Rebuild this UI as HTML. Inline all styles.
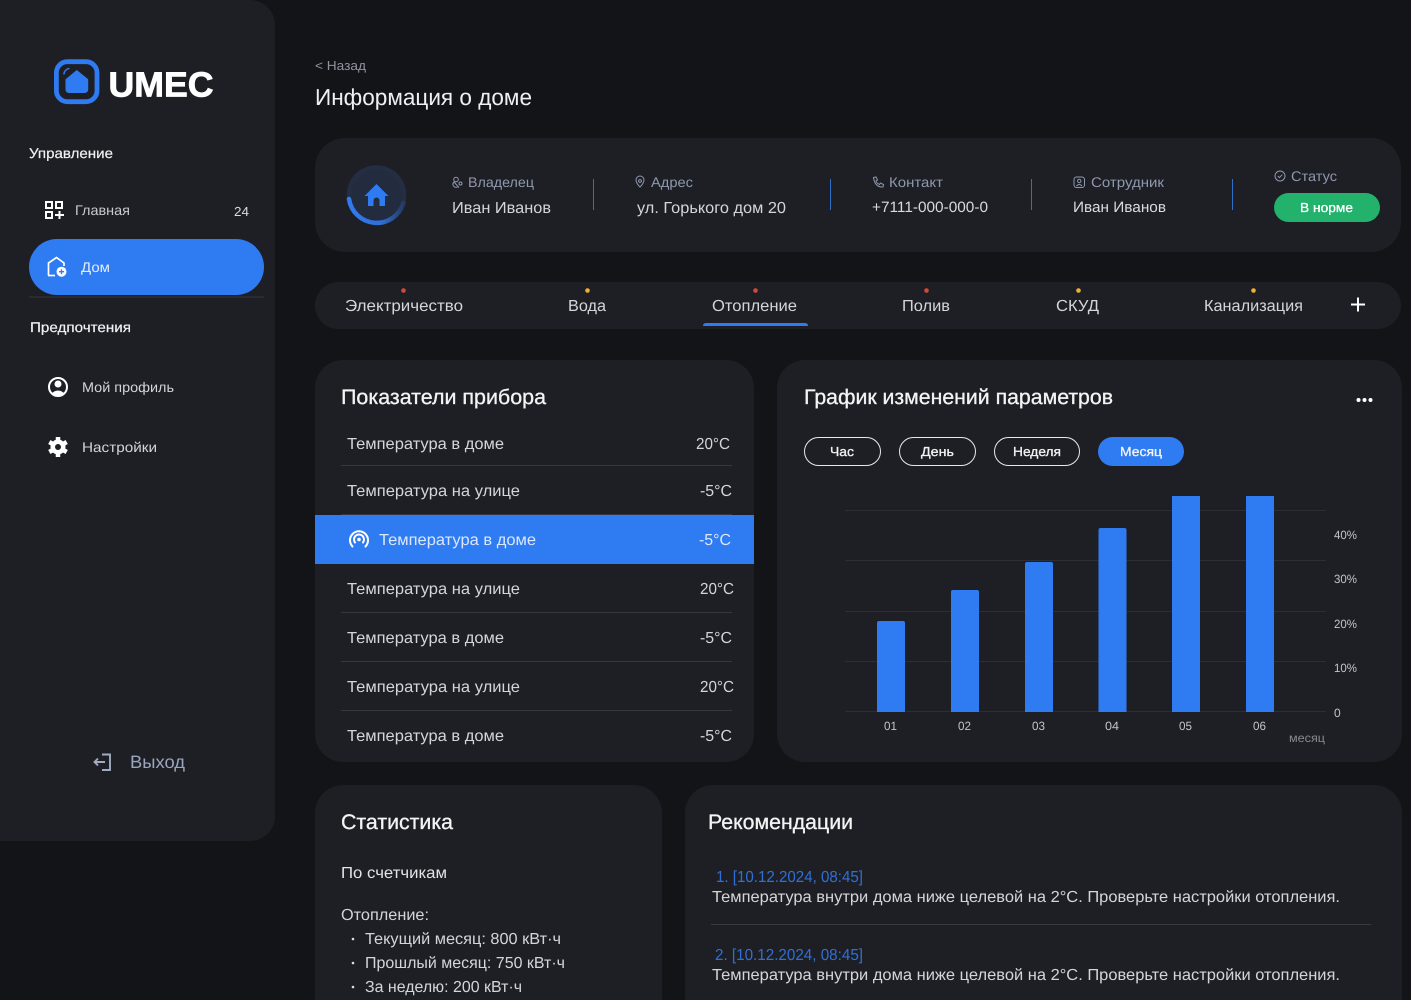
<!DOCTYPE html>
<html lang="ru"><head><meta charset="utf-8"><title>UMEC</title>
<style>
html,body{margin:0;padding:0;background:#131417;width:1411px;height:1000px;overflow:hidden}
svg{display:block}
text{font-family:"Liberation Sans",sans-serif;font-size:16px;fill:#dcdde0;text-rendering:geometricPrecision}
.h{font-size:21px;fill:#f4f4f5;stroke:#f4f4f5;stroke-width:.3px}
.s{font-size:14px;fill:#8f98ad}
.n{font-size:14px;fill:#d9dade}
.r{font-size:16px;fill:#d4d5d8}
.c{font-size:12px;fill:#c4c5c9}
.b{font-size:13px;fill:#f2f2f3;stroke:#f2f2f3;stroke-width:.3px}
.m{font-size:14px;fill:#f0f0f2;stroke:#f0f0f2;stroke-width:.2px}
</style></head><body>
<svg width="1411" height="1000" viewBox="0 0 1411 1000" xmlns="http://www.w3.org/2000/svg">
<defs>
<linearGradient id="g" x1="0" y1="0" x2="1" y2="0"><stop offset="0" stop-color="#2f7bf2"/><stop offset=".6" stop-color="#2f6fd8"/><stop offset="1" stop-color="#25395f"/></linearGradient>
</defs>
<rect width="1411" height="1000" fill="#131417"/>

<!-- sidebar -->
<path d="M0 0H250a25 25 0 0 1 25 25V816a25 25 0 0 1-25 25H0Z" fill="#1e1f25"/>
<rect x="56.400" y="61.700" width="40.600" height="40" rx="11" fill="none" stroke="#2f7bf2" stroke-width="4.800"/>
<path d="M66 79.500 76.800 70.700 87.700 79.500V89.500a3 3 0 0 1-3 3H69a3 3 0 0 1-3-3Z" fill="#2f7bf2" stroke="#2f7bf2" stroke-width="1" stroke-linejoin="round"/>
<path d="M63.800 74.500q.5-5 5.700-6.200" fill="none" stroke="#2f7bf2" stroke-width="1.500"/>
<text x="108.500" y="96.500" textLength="105" lengthAdjust="spacingAndGlyphs" style="font-size:35px;font-weight:700;fill:#fff;stroke:#fff;stroke-width:.8px">UMEC</text>

<text x="29" y="158" textLength="84" lengthAdjust="spacingAndGlyphs" class="m">Управление</text>
<g fill="none" stroke="#fff" stroke-width="2">
<rect x="46" y="202" width="6" height="6"/><rect x="56" y="202" width="6" height="6"/><rect x="46" y="212" width="6" height="6"/>
<path d="M55 215h9M59.500 211v8"/>
</g>
<text x="75" y="215" textLength="55" lengthAdjust="spacingAndGlyphs" class="n" style="fill:#c9cacd">Главная</text>
<text x="234" y="216" textLength="15" lengthAdjust="spacingAndGlyphs" class="n" style="font-size:13px">24</text>

<rect x="29" y="239" width="235" height="56" rx="28" fill="#2f7bf2"/>
<path d="M48.500 275.500V263L56.500 257.500l7.500 5.500v3" fill="none" stroke="#fff" stroke-width="1.700"/>
<path d="M48 275.500h7" stroke="#fff" stroke-width="1.700"/>
<circle cx="61.500" cy="271.700" r="5" fill="#fff"/><path d="M59 271.700h5M61.500 269.200v5" stroke="#2f7bf2" stroke-width="1.300"/>
<text x="81" y="272" textLength="29" lengthAdjust="spacingAndGlyphs" class="n" style="fill:#e4ecfb">Дом</text>
<rect x="29" y="296" width="235" height="2" fill="#2a2b31"/>

<text x="30" y="332" textLength="101" lengthAdjust="spacingAndGlyphs" class="m">Предпочтения</text>
<circle cx="58" cy="387" r="9" fill="none" stroke="#fff" stroke-width="2"/>
<circle cx="58" cy="384" r="3.500" fill="#fff"/>
<path d="M51.500 393.500q6.500-6 13 0q-6.500 4-13 0Z" fill="#fff"/>
<text x="82" y="392" textLength="92" lengthAdjust="spacingAndGlyphs" class="n" style="fill:#d3d4d7">Мой профиль</text>
<g stroke="#fff" stroke-width="4.500"><path d="M58 437v20M49.300 442l17.400 10M49.300 452l17.400-10"/></g>
<circle cx="58" cy="447" r="7.500" fill="#fff"/><circle cx="58" cy="447" r="3" fill="#1e1f25"/>
<text x="82" y="452" textLength="75" lengthAdjust="spacingAndGlyphs" class="n" style="fill:#d3d4d7">Настройки</text>

<path d="M102 754.500h8v15.500H102M105 762H94.500M98 758.500 94.500 762l3.500 3.500" fill="none" stroke="#a0abc3" stroke-width="1.900"/>
<text x="130" y="768" textLength="55" lengthAdjust="spacingAndGlyphs" style="font-size:18px;fill:#9aa6bf">Выход</text>

<!-- header -->
<text x="315" y="70" textLength="51" lengthAdjust="spacingAndGlyphs" style="font-size:13px;fill:#8f93a0">&lt; Назад</text>
<text x="315" y="105" textLength="217" lengthAdjust="spacingAndGlyphs" style="font-size:23px;fill:#f0f0f2">Информация о доме</text>

<rect x="315" y="138" width="1086" height="114" rx="30" fill="#1e1f25"/>
<circle cx="376.500" cy="195" r="29.800" fill="#232e44"/>
<circle cx="376.500" cy="195" r="25" fill="#232c3e"/>
<path d="M349 199A28 28 0 0 0 403.500 203" fill="none" stroke="url(#g)" stroke-width="4.500" stroke-linecap="round"/>
<path d="M376.500 184 388.500 196H385V206H379.500V200.500a3 3 0 0 0-6 0V206H368V196H364.500Z" fill="#2f7bf2"/>

<g fill="none" stroke="#8f98ad" stroke-width="1">
<circle cx="456" cy="179.500" r="2.300"/><path d="M459 187.500 454 182q-2 2-.5 4t4 1"/><circle cx="460.500" cy="183.500" r="1.500"/>
<path d="M640 187q-4-4-4-7a4 4 0 0 1 8 0q0 3-4 7Z"/><circle cx="640" cy="181" r="1.400"/>
<path d="M873.500 177.500l2.500-.500 1.500 3-1.500 1q1 2.500 3.500 3.500l1-1.500 3 1.500-.5 2.500q-8 .5-9.500-9.500Z"/>
<rect x="1074" y="177" width="10.500" height="10.500" rx="2.500"/><circle cx="1079.250" cy="181" r="1.700"/><path d="M1076.500 186q2.700-3 5.500 0"/>
<circle cx="1280" cy="176" r="5"/><path d="M1277.800 176l1.600 1.700 2.800-3"/>
</g>

<text x="468" y="187" textLength="66" lengthAdjust="spacingAndGlyphs" class="s">Владелец</text>
<text x="452" y="213" textLength="99" lengthAdjust="spacingAndGlyphs" class="r">Иван Иванов</text>
<text x="651" y="187" textLength="42" lengthAdjust="spacingAndGlyphs" class="s">Адрес</text>
<text x="637" y="213" textLength="149" lengthAdjust="spacingAndGlyphs" class="r">ул. Горького дом 20</text>
<text x="889" y="187" textLength="54" lengthAdjust="spacingAndGlyphs" class="s">Контакт</text>
<text x="872" y="212" textLength="116" lengthAdjust="spacingAndGlyphs" class="n" style="font-size:15px">+7111-000-000-0</text>
<text x="1091" y="187" textLength="73" lengthAdjust="spacingAndGlyphs" class="s">Сотрудник</text>
<text x="1073" y="212" textLength="93" lengthAdjust="spacingAndGlyphs" class="n" style="font-size:15px">Иван Иванов</text>
<text x="1291" y="181" textLength="46" lengthAdjust="spacingAndGlyphs" class="s">Статус</text>
<g fill="#2e6fc9"><rect x="593" y="179" width="1" height="31"/><rect x="830" y="179" width="1" height="31"/><rect x="1031" y="179" width="1" height="31"/><rect x="1232" y="179" width="1" height="31"/></g>
<rect x="1274" y="193" width="106" height="29" rx="14.500" fill="#22b26c"/>
<text x="1300" y="212" textLength="53" lengthAdjust="spacingAndGlyphs" class="b" style="fill:#fff;stroke:#fff">В норме</text>

<!-- tabs -->
<rect x="315" y="282" width="1086" height="47" rx="23.500" fill="#1e1f25"/>
<g fill="#d2493a"><circle cx="403.500" cy="290.500" r="2.300"/><circle cx="755.500" cy="290.500" r="2.300"/><circle cx="926.500" cy="290.500" r="2.300"/></g>
<g fill="#f2ae2e"><circle cx="587.500" cy="290.500" r="2.300"/><circle cx="1078.500" cy="290.500" r="2.300"/><circle cx="1253.500" cy="290.500" r="2.300"/></g>
<g>
<text x="345" y="311" textLength="118" lengthAdjust="spacingAndGlyphs" class="r">Электричество</text>
<text x="568" y="311" textLength="38" lengthAdjust="spacingAndGlyphs" class="r">Вода</text>
<text x="712" y="311" textLength="85" lengthAdjust="spacingAndGlyphs" class="r">Отопление</text>
<text x="902" y="311" textLength="48" lengthAdjust="spacingAndGlyphs" class="r">Полив</text>
<text x="1056" y="311" textLength="43" lengthAdjust="spacingAndGlyphs" class="r">СКУД</text>
<text x="1204" y="311" textLength="99" lengthAdjust="spacingAndGlyphs" class="r">Канализация</text>
</g>
<path d="M703 326q0-3 3-3h99q3 0 3 3Z" fill="#2f7bf2"/>
<path d="M1351 304.500h14M1358 297.500v14" stroke="#fff" stroke-width="2"/>

<!-- device panel -->
<rect x="315" y="360" width="439" height="402" rx="28" fill="#1e1f25"/>
<text x="341" y="404" textLength="205" lengthAdjust="spacingAndGlyphs" class="h">Показатели прибора</text>
<g fill="#36373d"><rect x="341" y="465" width="391" height="1"/><rect x="341" y="514" width="391" height="1"/><rect x="341" y="612" width="391" height="1"/><rect x="341" y="661" width="391" height="1"/><rect x="341" y="710" width="391" height="1"/></g>
<rect x="315" y="515" width="439" height="49" fill="#2f7bf2"/>
<text x="347" y="449" textLength="157" lengthAdjust="spacingAndGlyphs" class="r">Температура в доме</text>
<text x="696" y="449" textLength="34" lengthAdjust="spacingAndGlyphs" class="r">20°C</text>
<text x="347" y="496" textLength="173" lengthAdjust="spacingAndGlyphs" class="r">Температура на улице</text>
<text x="700" y="496" textLength="32" lengthAdjust="spacingAndGlyphs" class="r">-5°C</text>
<g fill="none" stroke="#fff" stroke-width="2" stroke-linecap="round">
<path d="M352.500 546.500A9 9 0 1 1 365.500 546.500"/><path d="M355 542.500A5 5 0 1 1 363 542.500"/>
</g><circle cx="359" cy="539.500" r="1.800" fill="#fff"/>
<text x="379" y="545" textLength="157" lengthAdjust="spacingAndGlyphs" class="r" style="fill:#dbe7fd">Температура в доме</text>
<text x="699" y="545" textLength="32" lengthAdjust="spacingAndGlyphs" class="r" style="fill:#dbe7fd">-5°C</text>
<text x="347" y="594" textLength="173" lengthAdjust="spacingAndGlyphs" class="r">Температура на улице</text>
<text x="700" y="594" textLength="34" lengthAdjust="spacingAndGlyphs" class="r">20°C</text>
<text x="347" y="643" textLength="157" lengthAdjust="spacingAndGlyphs" class="r">Температура в доме</text>
<text x="700" y="643" textLength="32" lengthAdjust="spacingAndGlyphs" class="r">-5°C</text>
<text x="347" y="692" textLength="173" lengthAdjust="spacingAndGlyphs" class="r">Температура на улице</text>
<text x="700" y="692" textLength="34" lengthAdjust="spacingAndGlyphs" class="r">20°C</text>
<text x="347" y="741" textLength="157" lengthAdjust="spacingAndGlyphs" class="r">Температура в доме</text>
<text x="700" y="741" textLength="32" lengthAdjust="spacingAndGlyphs" class="r">-5°C</text>

<!-- chart panel -->
<rect x="777" y="360" width="625" height="402" rx="28" fill="#1e1f25"/>
<text x="804" y="404" textLength="309" lengthAdjust="spacingAndGlyphs" class="h">График изменений параметров</text>
<g fill="#fff"><circle cx="1358.500" cy="400" r="2"/><circle cx="1364.500" cy="400" r="2"/><circle cx="1370.500" cy="400" r="2"/></g>
<g fill="none" stroke="#e8e8ea" stroke-width="1">
<rect x="804.500" y="437.500" width="76" height="28" rx="14"/>
<rect x="899.500" y="437.500" width="76" height="28" rx="14"/>
<rect x="994.500" y="437.500" width="85" height="28" rx="14"/>
</g>
<rect x="1098" y="437" width="86" height="29" rx="14.500" fill="#2f7bf2"/>
<text x="830" y="456" textLength="24" lengthAdjust="spacingAndGlyphs" class="b">Час</text>
<text x="921" y="456" textLength="33" lengthAdjust="spacingAndGlyphs" class="b">День</text>
<text x="1013" y="456" textLength="48" lengthAdjust="spacingAndGlyphs" class="b">Неделя</text>
<text x="1120" y="456" textLength="42" lengthAdjust="spacingAndGlyphs" class="b">Месяц</text>
<g fill="#2d2e34"><rect x="845" y="510" width="481" height="1"/><rect x="845" y="560" width="481" height="1"/><rect x="845" y="611" width="481" height="1"/><rect x="845" y="661" width="481" height="1"/><rect x="845" y="711" width="481" height="1"/></g>
<g fill="#2f7bf2">
<path d="M877 712V623a2 2 0 0 1 2-2h24a2 2 0 0 1 2 2v89Z"/>
<path d="M951 712V592a2 2 0 0 1 2-2h24a2 2 0 0 1 2 2v120Z"/>
<path d="M1025 712V564a2 2 0 0 1 2-2h24a2 2 0 0 1 2 2v148Z"/>
<path d="M1098.500 712V530a2 2 0 0 1 2-2h24a2 2 0 0 1 2 2v182Z"/>
<rect x="1172" y="496" width="28" height="216"/>
<rect x="1246" y="496" width="28" height="216"/>
</g>
<text x="884" y="730" textLength="13" lengthAdjust="spacingAndGlyphs" class="c">01</text>
<text x="958" y="730" textLength="13" lengthAdjust="spacingAndGlyphs" class="c">02</text>
<text x="1032" y="730" textLength="13" lengthAdjust="spacingAndGlyphs" class="c">03</text>
<text x="1105" y="730" textLength="14" lengthAdjust="spacingAndGlyphs" class="c">04</text>
<text x="1179" y="730" textLength="13" lengthAdjust="spacingAndGlyphs" class="c">05</text>
<text x="1253" y="730" textLength="13" lengthAdjust="spacingAndGlyphs" class="c">06</text>
<text x="1334" y="539" textLength="23" lengthAdjust="spacingAndGlyphs" class="c">40%</text>
<text x="1334" y="583" textLength="23" lengthAdjust="spacingAndGlyphs" class="c">30%</text>
<text x="1334" y="628" textLength="23" lengthAdjust="spacingAndGlyphs" class="c">20%</text>
<text x="1334" y="672" textLength="23" lengthAdjust="spacingAndGlyphs" class="c">10%</text>
<text x="1334" y="717" class="c">0</text>
<text x="1289" y="742" textLength="36" lengthAdjust="spacingAndGlyphs" class="c" style="fill:#8a888d">месяц</text>

<!-- stats -->
<path d="M315 1000V813a28 28 0 0 1 28-28H634a28 28 0 0 1 28 28V1000Z" fill="#1e1f25"/>
<text x="341" y="829" textLength="112" lengthAdjust="spacingAndGlyphs" class="h">Статистика</text>
<text x="341" y="878" textLength="106" lengthAdjust="spacingAndGlyphs" class="r" style="fill:#e2e3e5">По счетчикам</text>
<text x="341" y="920" textLength="88" lengthAdjust="spacingAndGlyphs" class="r">Отопление:</text>
<g fill="#dcdde0"><circle cx="353" cy="939" r="1.300"/><circle cx="353" cy="963" r="1.300"/><circle cx="353" cy="987" r="1.300"/></g>
<text x="365" y="944" textLength="196" lengthAdjust="spacingAndGlyphs" class="r">Текущий месяц: 800 кВт·ч</text>
<text x="365" y="968" textLength="200" lengthAdjust="spacingAndGlyphs" class="r">Прошлый месяц: 750 кВт·ч</text>
<text x="365" y="992" textLength="157" lengthAdjust="spacingAndGlyphs" class="r">За неделю: 200 кВт·ч</text>

<!-- recommendations -->
<path d="M685 1000V813a28 28 0 0 1 28-28H1374a28 28 0 0 1 28 28V1000Z" fill="#1e1f25"/>
<text x="708" y="829" textLength="145" lengthAdjust="spacingAndGlyphs" class="h">Рекомендации</text>
<text x="716" y="882" textLength="147" lengthAdjust="spacingAndGlyphs" class="r" style="fill:#2f6fd6">1. [10.12.2024, 08:45]</text>
<text x="712" y="902" textLength="628" lengthAdjust="spacingAndGlyphs" class="r">Температура внутри дома ниже целевой на 2°C. Проверьте настройки отопления.</text>
<rect x="711" y="924" width="660" height="1" fill="#3a3b41"/>
<text x="715" y="960" textLength="148" lengthAdjust="spacingAndGlyphs" class="r" style="fill:#2f6fd6">2. [10.12.2024, 08:45]</text>
<text x="712" y="980" textLength="628" lengthAdjust="spacingAndGlyphs" class="r">Температура внутри дома ниже целевой на 2°C. Проверьте настройки отопления.</text>
</svg>
</body></html>
